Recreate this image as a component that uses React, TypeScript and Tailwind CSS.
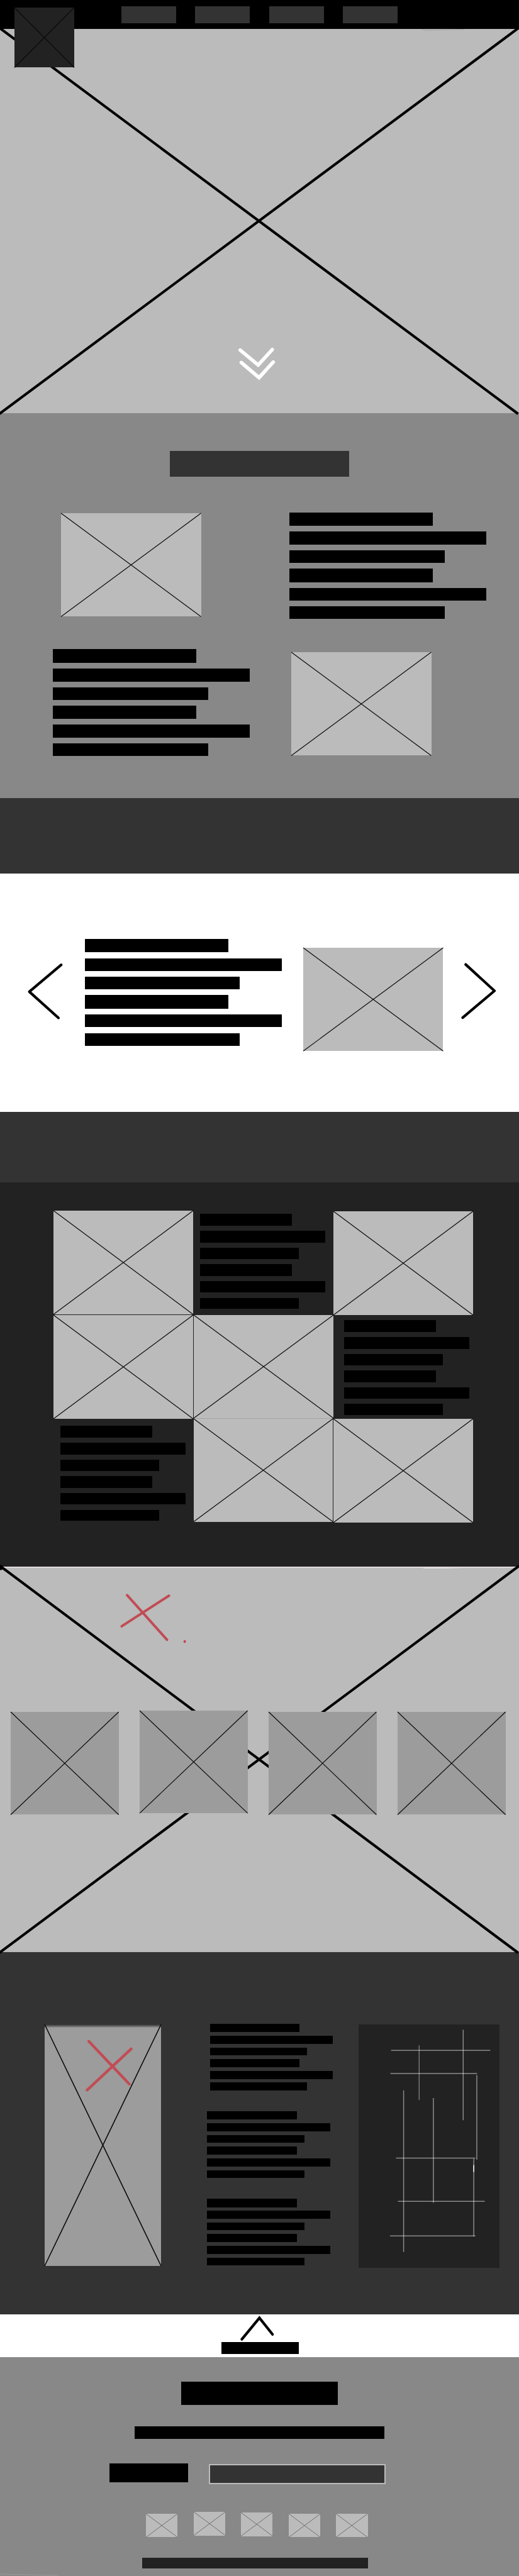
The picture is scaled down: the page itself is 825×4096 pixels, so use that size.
import React from "react";

const BLOCK = {
  lg: {
    wrap: "flex shrink-0 flex-col w-[313px] gap-[9.17px]",
    rows: ["w-[228.3px] h-[21.4px]", "w-[313px] h-[20.6px]", "w-[246.7px] h-[19.9px]"],
  },
  md: {
    wrap: "flex shrink-0 flex-col w-[199.2px] gap-[8.2px]",
    rows: ["w-[145.4px] h-[18.9px]", "w-[199.2px] h-[18.4px]", "w-[157.2px] h-[17.8px]"],
  },
  sm: {
    wrap: "flex shrink-0 flex-col w-[195.5px] gap-[5.64px]",
    rows: ["w-[142.9px] h-[13.4px]", "w-[195.5px] h-[13px]", "w-[154.2px] h-[12.5px]"],
  },
};

function TextBlock({ size, className = "" }: { size: keyof typeof BLOCK; className?: string }) {
  const { wrap, rows } = BLOCK[size];
  return (
    <div className={`${wrap} ${className}`}>
      {[...rows, ...rows].map((row, i) => (
        <div key={i} className={`${row} shrink-0 bg-black`} />
      ))}
    </div>
  );
}

function Placeholder({
  className,
  stroke = "#0a0a0a",
  width = 1.2,
}: {
  className: string;
  stroke?: string;
  width?: number;
}) {
  return (
    <div className={`shrink-0 ${className}`}>
      <svg
        className="block h-full w-full overflow-visible"
        viewBox="0 0 100 100"
        preserveAspectRatio="none"
        stroke={stroke}
        strokeWidth={width}
      >
        <line x1="0" y1="0" x2="100" y2="100" vectorEffect="non-scaling-stroke" />
        <line x1="100" y1="0" x2="0" y2="100" vectorEffect="non-scaling-stroke" />
      </svg>
    </div>
  );
}

function Header() {
  return (
    <header className="relative z-10 flex h-[46px] bg-black pl-[192.6px] pt-[10px]">
      <nav className="flex gap-[30.6px]">
        {[0, 1, 2, 3].map((i) => (
          <div key={i} className="h-[27px] w-[87px] bg-[#333333]" />
        ))}
      </nav>
      <Placeholder
        className="absolute left-[23px] top-[11.5px] h-[95.5px] w-[95px] bg-[#222222]"
        stroke="#0b0b0b"
        width={1.3}
      />
    </header>
  );
}

function Hero() {
  return (
    <section className="h-[611px] bg-[#bbbbbb]">
      <svg className="block h-[611px] w-full overflow-visible" viewBox="0 0 825 611" fill="none">
        <path d="M671 0.5 L675 2 L705 1.6 L738 0.5" stroke="#a3a3a3" strokeWidth="1" />
        <g stroke="#000" strokeWidth="4.1">
          <line x1="0" y1="-1" x2="823.5" y2="612" />
          <line x1="825" y1="-2" x2="-1" y2="612" />
        </g>
        <g stroke="#fff" strokeWidth="5.6" strokeLinecap="round">
          <path d="M381.8 510.6 L410.4 534.5 L432.8 509.8" />
          <path d="M383.6 530.5 L411.8 554.5 L434.4 529.7" />
        </g>
      </svg>
    </section>
  );
}

function About() {
  return (
    <section className="flex h-[612px] flex-col bg-[#888888] pt-[60px]">
      <div className="ml-[270px] h-[41px] w-[285px] shrink-0 bg-[#333333]" />
      <div className="mt-[56.8px] flex h-[170px] shrink-0 pl-[97px]">
        <Placeholder className="mt-[1.2px] h-[164.5px] w-[222.5px] bg-[#bbbbbb]" />
        <TextBlock size="lg" className="ml-[140.5px]" />
      </div>
      <div className="mt-[47.6px] flex h-[170px] shrink-0 pl-[84.2px]">
        <TextBlock size="lg" />
        <Placeholder className="ml-[66.3px] mt-[4.2px] h-[164.5px] w-[222.5px] bg-[#bbbbbb]" />
      </div>
    </section>
  );
}

function Carousel() {
  return (
    <section className="flex h-[379px] items-start bg-white">
      <svg className="ml-[40px] mt-[137px] h-[104px] w-[66px] shrink-0" viewBox="40 1526 66 104" fill="none">
        <path
          d="M97.3 1534.2 L46.6 1576.9 L92.9 1618.5"
          stroke="#000"
          strokeWidth="4.2"
          strokeLinecap="round"
          strokeLinejoin="round"
        />
      </svg>
      <TextBlock size="lg" className="ml-[28.7px] mt-[104.5px]" />
      <Placeholder className="ml-[34.3px] mt-[118.1px] h-[164.3px] w-[222.5px] bg-[#bbbbbb]" />
      <svg className="ml-[23.5px] mt-[137px] h-[104px] w-[66px] shrink-0" viewBox="728 1526 66 104" fill="none">
        <path
          d="M740.3 1533.6 L786 1575.5 L735.5 1618.1"
          stroke="#000"
          strokeWidth="4.2"
          strokeLinecap="round"
          strokeLinejoin="round"
        />
      </svg>
    </section>
  );
}

function Gallery() {
  return (
    <section className="h-[611px] bg-[#222222] pl-[85px] pt-[45px]">
      <div className="grid grid-cols-[223px_222px_222px] grid-rows-[166px_164px_166px]">
        <Placeholder className="h-[165px] w-[222px] bg-[#bbbbbb]" />
        <TextBlock size="md" className="ml-[10.3px] mt-[5.3px]" />
        <Placeholder className="mt-px h-[165px] w-[222px] bg-[#bbbbbb]" />
        <Placeholder className="h-[165px] w-[222px] bg-[#bbbbbb]" />
        <Placeholder className="h-[164px] w-[222px] bg-[#bbbbbb]" />
        <TextBlock size="md" className="ml-[17.2px] mt-[8.1px]" />
        <TextBlock size="md" className="ml-[11.3px] mt-[12.3px]" />
        <Placeholder className="h-[164.5px] w-[221px] border-t border-[#a4a4a4] bg-[#bbbbbb]" />
        <Placeholder className="mt-px h-[165px] w-[222px] bg-[#bbbbbb]" />
      </div>
    </section>
  );
}

function Showcase() {
  return (
    <section className="relative h-[613px] bg-[#bbbbbb]">
      <svg className="absolute inset-0 h-[613px] w-[825px] overflow-visible" viewBox="0 0 825 613" fill="none">
        <rect x="0" y="0" width="825" height="2" fill="#e0dadd" />
        <path d="M673 2 H740 L706 3 H673 Z" fill="#e4e0e2" />
        <g stroke="#000" strokeWidth="4.1">
          <line x1="0" y1="-1" x2="823.5" y2="614" />
          <line x1="825" y1="-1" x2="-1" y2="614" />
        </g>
        <ellipse cx="1.5" cy="1.5" rx="3" ry="4" fill="#000" />
        <g stroke="#c14c54" strokeWidth="4" strokeLinecap="round">
          <line x1="202" y1="45.4" x2="265.5" y2="116.3" />
          <line x1="268.6" y1="46.3" x2="193.4" y2="94.9" />
        </g>
        <ellipse cx="293.6" cy="119.2" rx="2" ry="2.4" fill="#c14c54" />
      </svg>
      <div className="relative flex gap-[33.5px] pl-[17px] pt-[229px]">
        <Placeholder className="mt-[1.5px] h-[163.5px] w-[171.7px] bg-[#9c9c9c]" />
        <Placeholder className="h-[163.2px] w-[171.7px] bg-[#9c9c9c]" />
        <Placeholder className="mt-[1.5px] h-[163.5px] w-[171.4px] bg-[#9c9c9c]" />
        <Placeholder className="mt-[1.5px] h-[163.5px] w-[171.7px] bg-[#9c9c9c]" />
      </div>
    </section>
  );
}

function Features() {
  return (
    <section className="flex h-[576px] items-start bg-[#333333] pl-[70.5px] pt-[114px]">
      <div className="relative mt-[1px] shrink-0">
        <Placeholder
          className="h-[384px] w-[185px] bg-linear-to-b from-[#333333] from-0% via-[#9c9c9c] via-[1.4%] to-[#9c9c9c]"
          width={1.6}
        />
        <svg className="absolute left-[59px] top-[18px] h-[95px] w-[88px]" viewBox="129.5 3237 88 95" fill="none">
          <g stroke="#c14c54" strokeWidth="4.4" strokeLinecap="round">
            <line x1="140.6" y1="3245.8" x2="205" y2="3313.8" />
            <line x1="208" y1="3257.9" x2="138" y2="3323.3" />
          </g>
        </svg>
      </div>
      <div className="ml-[73.9px] flex w-[200px] shrink-0 flex-col gap-[33.2px]">
        <TextBlock size="sm" className="ml-[4.2px]" />
        <TextBlock size="sm" />
        <TextBlock size="sm" />
      </div>
      <div className="ml-[40.4px] mt-[0.6px] h-[387px] w-[224.7px] shrink-0 bg-[#222222]">
        <svg className="block h-[387px] w-[225px]" viewBox="569.8 3218.6 225 387" fill="none">
          <g stroke="#fff" strokeOpacity="0.48" strokeWidth="1.5">
            <line x1="621.4" y1="3259.8" x2="779.2" y2="3259.8" />
            <line x1="620.3" y1="3296.6" x2="758.2" y2="3296.6" />
            <line x1="629.3" y1="3431.2" x2="755.5" y2="3431.2" />
            <line x1="632.4" y1="3499.9" x2="770.3" y2="3499.9" />
            <line x1="619.8" y1="3554.9" x2="755.5" y2="3554.9" />
            <line x1="666.1" y1="3251.9" x2="666.1" y2="3338.8" strokeWidth="1.2" />
            <line x1="736.1" y1="3227" x2="736.1" y2="3370.9" />
            <line x1="757.7" y1="3299" x2="757.7" y2="3433.5" />
            <line x1="641.4" y1="3323.3" x2="641.4" y2="3580.3" />
            <line x1="688.7" y1="3335.5" x2="688.7" y2="3502.2" />
            <line x1="752.9" y1="3432" x2="752.9" y2="3555.4" />
          </g>
          <line x1="752.9" y1="3442" x2="752.9" y2="3453" stroke="#fff" strokeWidth="1.4" />
        </svg>
      </div>
    </section>
  );
}

function BackToTop() {
  return (
    <section className="flex h-[67.5px] flex-col items-start bg-white">
      <svg className="ml-[376px] h-[44px] w-[66px] shrink-0" viewBox="376 3680 66 44" fill="none">
        <path d="M384.4 3719.6 L412.4 3685.6 L433.2 3711.8" stroke="#000" strokeWidth="4.2" strokeLinecap="round" />
      </svg>
      <div className="ml-[351.5px] h-[19px] w-[123px] shrink-0 bg-black" />
    </section>
  );
}

function Footer() {
  const icon = "h-[37.5px] w-[50.3px] bg-[#bbbbbb]";
  return (
    <footer className="flex h-[348.5px] flex-col items-start overflow-hidden bg-[#888888] pt-[39.1px]">
      <div className="ml-[288px] h-[37.2px] w-[249px] shrink-0 bg-black" />
      <div className="ml-[214px] mt-[33.9px] h-[20.5px] w-[397px] shrink-0 bg-black" />
      <div className="ml-[173.6px] mt-[38.8px] flex shrink-0 items-start">
        <div className="h-[30px] w-[125.3px] bg-black" />
        <div className="ml-[33.6px] mt-[0.9px] h-[32.1px] w-[281px] border-2 border-[#bbbbbb] bg-[#333333]" />
      </div>
      <div className="ml-[232px] mt-[44.3px] flex h-[39.7px] shrink-0 gap-[25.3px]">
        <Placeholder className={`${icon} mt-[2.3px]`} stroke="#6f6f6f" width={1} />
        <Placeholder className={icon} stroke="#6f6f6f" width={1} />
        <Placeholder className={`${icon} mt-[0.8px]`} stroke="#6f6f6f" width={1} />
        <Placeholder className={`${icon} mt-[2.3px]`} stroke="#6f6f6f" width={1} />
        <Placeholder className={`${icon} mt-[2.3px]`} stroke="#6f6f6f" width={1} />
      </div>
      <div className="ml-[226.2px] mt-[33.1px] h-[16.6px] w-[359px] shrink-0 bg-[#222222]" />
      <svg className="mt-[8px] block h-[4px] w-[95px] shrink-0" viewBox="0 0 95 4" fill="none">
        <line x1="0" y1="1" x2="92" y2="3" stroke="#989898" strokeWidth="1" />
      </svg>
    </footer>
  );
}

export default function App() {
  return (
    <div className="h-[4096px] w-[825px] overflow-hidden bg-white">
      <Header />
      <Hero />
      <About />
      <div className="h-[119.5px] bg-[#333333]" />
      <Carousel />
      <div className="h-[112.5px] bg-[#333333]" />
      <Gallery />
      <Showcase />
      <Features />
      <BackToTop />
      <Footer />
    </div>
  );
}
